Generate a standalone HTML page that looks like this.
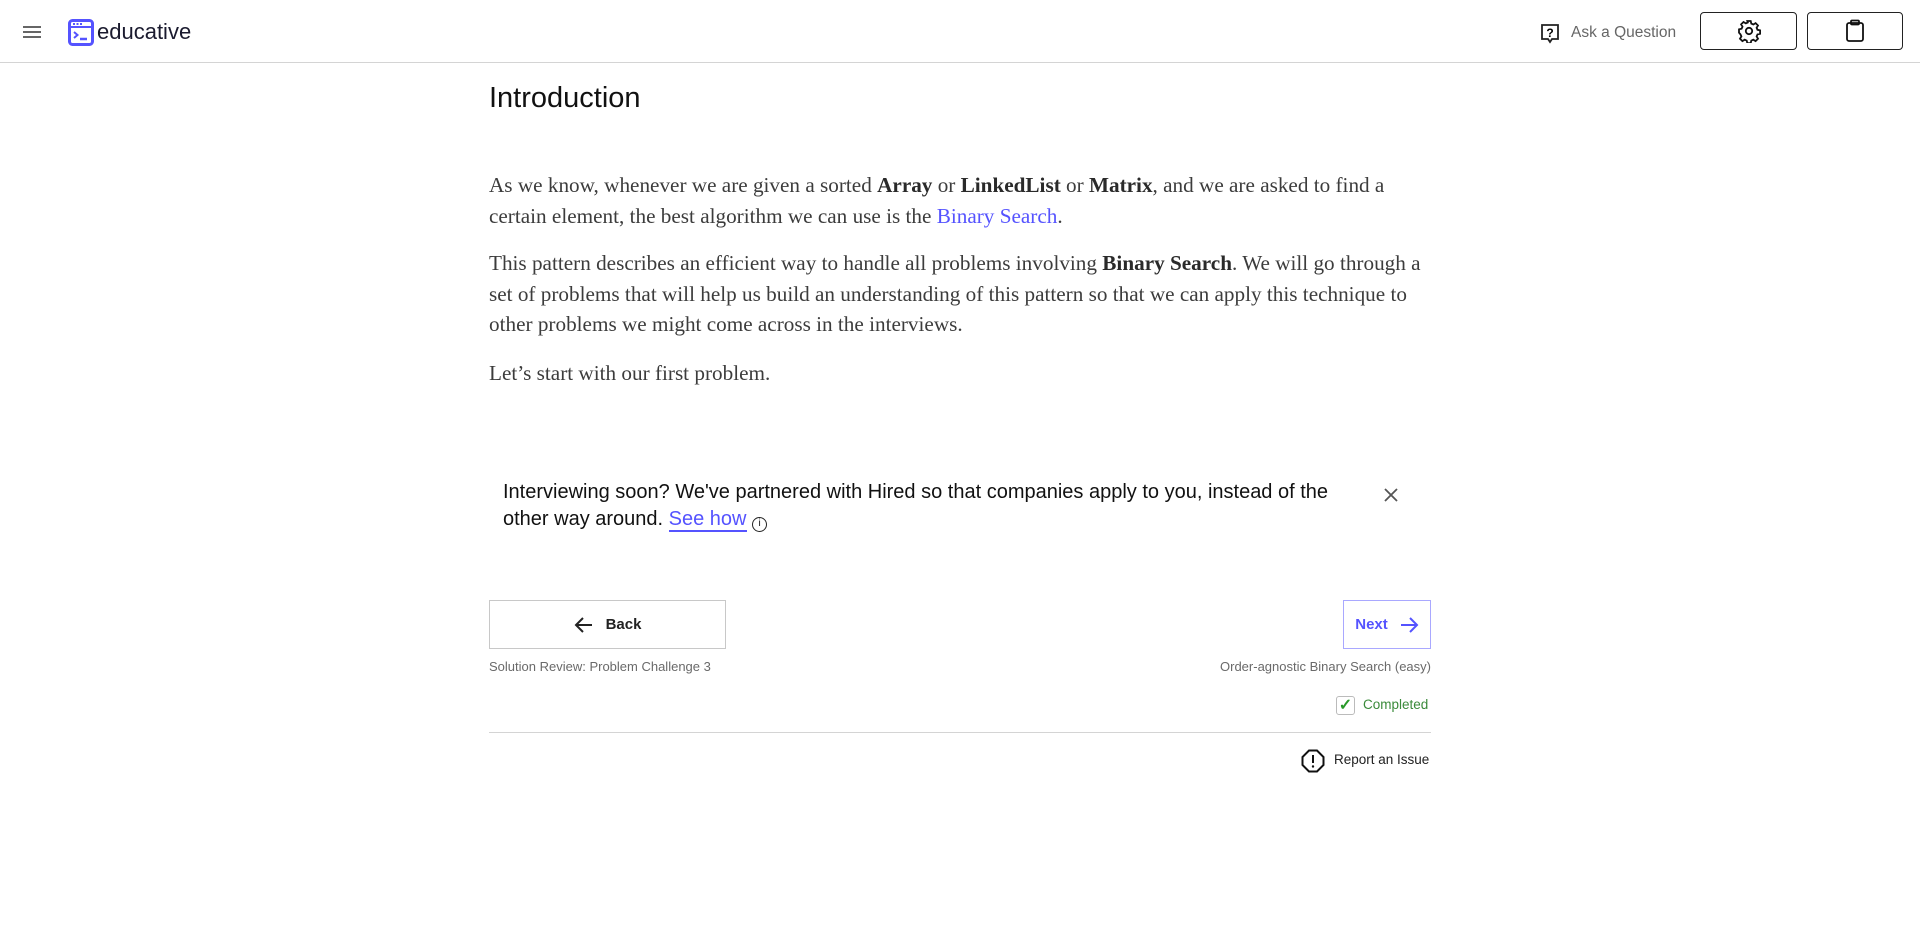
<!DOCTYPE html>
<html><head><meta charset="utf-8"><style>
*{margin:0;padding:0;box-sizing:border-box}
body{width:1920px;height:943px;background:#fff;font-family:"Liberation Sans",sans-serif;color:#111;position:relative;overflow:hidden}
.hdr{position:absolute;left:0;top:0;width:1920px;height:63px;border-bottom:1px solid #d4d4d4}
.abs{position:absolute}
.btn{position:absolute;top:12px;height:38px;border:1px solid #222;border-radius:4px;display:flex;align-items:center;justify-content:center}
p.t{position:absolute;left:489px;width:952px;font-family:"Liberation Serif",serif;font-size:21.2px;line-height:30.5px;color:#3c3c3c}
p.t b{color:#2a2a2a}
a{color:#5553ff;text-decoration:none}
</style></head><body>
<div class="hdr">
 <svg class="abs" style="left:22px;top:24px" width="20" height="16"><path d="M1 3h18M1 8h18M1 13h18" stroke="#666" stroke-width="2"/></svg>
 <svg class="abs" style="left:68px;top:19px" width="26" height="27" viewBox="0 0 26 27"><rect x="1.5" y="1.5" width="23" height="24" rx="3" fill="none" stroke="#5553ff" stroke-width="3"/><path d="M2 8h22" stroke="#5553ff" stroke-width="2"/><rect x="5" y="4" width="2" height="2" fill="#5553ff"/><rect x="8.5" y="4" width="2" height="2" fill="#5553ff"/><rect x="12" y="4" width="2" height="2" fill="#5553ff"/><path d="M6 13l3.5 3-3.5 3" stroke="#5553ff" stroke-width="2" fill="none"/><path d="M12 20h7" stroke="#5553ff" stroke-width="2.5"/></svg>
 <div class="abs" style="left:97px;top:19px;font-size:22px;color:#1a1a2e">educative</div>
 <svg class="abs" style="left:1540px;top:23px" width="20" height="21" viewBox="0 0 20 21"><path d="M2 2h16v14h-6l-2 3-2-3H2z" fill="none" stroke="#222" stroke-width="1.8"/><text x="10" y="14" font-size="12" font-weight="bold" text-anchor="middle" font-family="Liberation Sans">?</text></svg>
 <div class="abs" style="left:1571px;top:24px;font-size:15.5px;color:#666">Ask a Question</div>
 <div class="btn" style="left:1700px;width:97px"><svg width="24" height="24" viewBox="0 0 24 24" fill="none" stroke="#111" stroke-width="1.8"><circle cx="12" cy="12" r="3.2"/><path d="M10.3 2h3.4l.6 2.6 2 .9 2.3-1.4 2.4 2.4-1.4 2.3.9 2 2.6.6v3.4l-2.6.6-.9 2 1.4 2.3-2.4 2.4-2.3-1.4-2 .9-.6 2.6h-3.4l-.6-2.6-2-.9-2.3 1.4-2.4-2.4 1.4-2.3-.9-2L2 13.7v-3.4l2.6-.6.9-2-1.4-2.3 2.4-2.4 2.3 1.4 2-.9z"/></svg></div>
 <div class="btn" style="left:1807px;width:96px"><svg width="20" height="24" viewBox="0 0 20 24" fill="none" stroke="#111" stroke-width="1.8"><rect x="2" y="4" width="16" height="18" rx="2"/><rect x="6" y="1.5" width="8" height="4" rx="1"/></svg></div>
</div>
<div class="abs" style="left:489px;top:82px;font-size:29px;color:#111">Introduction</div>
<p class="t" style="top:170px">As we know, whenever we are given a sorted <b>Array</b> or <b>LinkedList</b> or <b>Matrix</b>, and we are asked to find a certain element, the best algorithm we can use is the <a>Binary Search</a>.</p>
<p class="t" style="top:248px">This pattern describes an efficient way to handle all problems involving <b>Binary Search</b>. We will go through a set of problems that will help us build an understanding of this pattern so that we can apply this technique to other problems we might come across in the interviews.</p>
<p class="t" style="top:358px">Let’s start with our first problem.</p>
<div class="abs" style="left:503px;top:479px;width:845px;font-size:20px;line-height:27px;color:#111">Interviewing soon? We've partnered with Hired so that companies apply to you, instead of the other way around. <a style="border-bottom:2px solid #5553ff">See how</a> <span style="display:inline-block;width:15px;height:15px;border:1.5px solid #222;border-radius:50%;font-size:10px;text-align:center;line-height:12px;vertical-align:-1px">i</span></div>
<svg class="abs" style="left:1383px;top:487px" width="16" height="16"><path d="M2 2l12 12M14 2L2 14" stroke="#555" stroke-width="1.8"/></svg>
<div class="abs" style="left:489px;top:600px;width:237px;height:49px;border:1px solid #c8c8c8;display:flex;align-items:center;justify-content:center;font-size:15px;font-weight:bold;color:#222"><svg width="20" height="18" viewBox="0 0 20 18" style="margin-right:12px"><path d="M18 9H3M9 2L2 9l7 7" fill="none" stroke="#222" stroke-width="2"/></svg>Back</div>
<div class="abs" style="left:1343px;top:600px;width:88px;height:49px;border:1px solid #a9a8ff;display:flex;align-items:center;justify-content:center;font-size:15px;font-weight:bold;color:#5553ff">Next<svg width="20" height="18" viewBox="0 0 20 18" style="margin-left:11px"><path d="M2 9h15M11 2l7 7-7 7" fill="none" stroke="#5553ff" stroke-width="2"/></svg></div>
<div class="abs" style="left:489px;top:659px;font-size:13px;color:#6a6a6a">Solution Review: Problem Challenge 3</div>
<div class="abs" style="left:1131px;top:659px;width:300px;text-align:right;font-size:13px;color:#6a6a6a">Order-agnostic Binary Search (easy)</div>
<div class="abs" style="left:1336px;top:696px;width:19px;height:19px;border:1px solid #bbb;border-radius:3px;color:#2a9a2a;font-size:16px;line-height:18px;text-align:center;font-weight:bold">✓</div>
<div class="abs" style="left:1363px;top:697px;font-size:13.5px;color:#3a8a3a">Completed</div>
<div class="abs" style="left:489px;top:732px;width:942px;height:1px;background:#d4d4d4"></div>
<svg class="abs" style="left:1301px;top:749px" width="24" height="24" viewBox="0 0 24 24"><path d="M8 1.5h8l6.5 6.5v8L16 22.5H8L1.5 16V8z" fill="none" stroke="#111" stroke-width="2"/><path d="M12 6v8" stroke="#111" stroke-width="2"/><circle cx="12" cy="17.5" r="1.2" fill="#111"/></svg>
<div class="abs" style="left:1334px;top:752px;font-size:13.5px;color:#222">Report an Issue</div>
</body></html>
